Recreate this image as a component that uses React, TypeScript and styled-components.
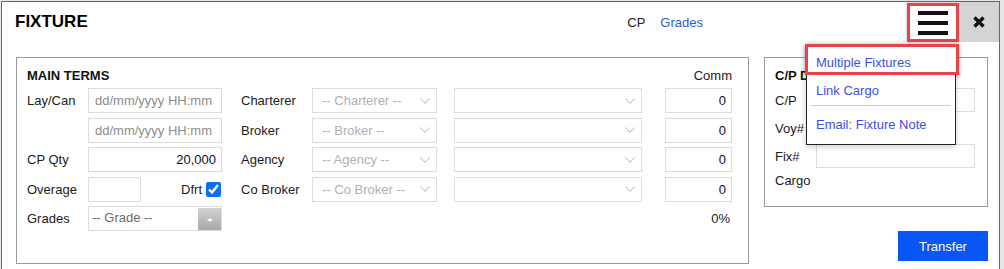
import { Fragment } from 'react';
import styled, { createGlobalStyle } from 'styled-components';
import { ChevronDown } from 'lucide-react';

const GlobalStyle = createGlobalStyle`
  html, body {
    overflow: hidden;
  }
  body {
    margin: 0;
    background: #e6e6e6;
    font-family: 'Liberation Sans', Arial, sans-serif;
    font-size: 13px;
    color: #1b1b1b;
  }
`;

const Modal = styled.div`
  position: relative;
  margin: 1px 0 0 1px;
  width: 999px;
  height: 268px;
  box-sizing: border-box;
  border: 1px solid #2f6de2;
  border-bottom: none;
  background: #fff;
`;

const Header = styled.header`
  display: flex;
  align-items: center;
  height: 40px;
`;

const Title = styled.h1`
  flex: 1;
  margin: 0;
  padding-left: 13px;
  font-size: 17px;
  font-weight: bold;
  color: #000;
`;

const HeadLinks = styled.nav`
  display: flex;
  gap: 15px;
  margin-right: 204px;
`;

const HeadLink = styled.a<{ $active?: boolean }>`
  color: ${(p) => (p.$active ? '#1b1b1b' : '#2d5be3')};
  text-decoration: none;
`;

const MenuButton = styled.button`
  align-self: flex-end;
  width: 52px;
  height: 39px;
  box-sizing: border-box;
  border: 3px solid #ea4246;
  box-shadow: 0 0 3px rgba(0, 0, 0, 0.3);
  background: #fff;
  padding: 0;
  display: flex;
  flex-direction: column;
  align-items: center;
  justify-content: center;
  gap: 6px;
`;

const MenuLine = styled.span`
  display: block;
  width: 30px;
  height: 4px;
  background: #111;
`;

const CloseButton = styled.button`
  align-self: stretch;
  width: 40px;
  border: none;
  padding: 0;
  background: #d4d4d4;
  display: flex;
  align-items: center;
  justify-content: center;
`;

const Dropdown = styled.ul`
  position: absolute;
  left: 804px;
  top: 42px;
  width: 150px;
  box-sizing: border-box;
  margin: 0;
  padding: 0 0 7px;
  list-style: none;
  background: #fff;
  border: 1px solid #222;
  box-shadow: 0 2px 6px rgba(0, 0, 0, 0.2);
  z-index: 5;
`;

const MenuItem = styled.li<{ $active?: boolean }>`
  display: flex;
  align-items: center;
  box-sizing: border-box;
  color: #3b4fe8;
  height: ${(p) => (p.$active ? '31px' : '28px')};
  padding: ${(p) => (p.$active ? '5px 0 0 8px' : '2px 0 0 9px')};
  margin: ${(p) => (p.$active ? '-1px -4px 0 -2px' : '0')};
  border: ${(p) => (p.$active ? '3px solid #ea4246' : 'none')};
  box-shadow: ${(p) => (p.$active ? '0 1px 4px rgba(0,0,0,0.35)' : 'none')};
  background: #fff;
`;

const MenuDivider = styled.li`
  height: 1px;
  margin: 2px 4px 3px;
  background: #cfcfcf;
`;

const Body = styled.div`
  display: flex;
  gap: 15px;
  padding: 15px 0 0 14px;
`;

const Panel = styled.section<{ $w: number; $h: number; $pr?: number }>`
  width: ${(p) => p.$w}px;
  height: ${(p) => p.$h}px;
  box-sizing: border-box;
  border: 1px solid #9a9a9a;
  padding: 9px ${(p) => p.$pr ?? 12}px 0 10px;
`;

const PanelHead = styled.div`
  display: flex;
  justify-content: space-between;
  align-items: center;
  height: 16px;
`;

const PanelTitle = styled.h2`
  margin: 0;
  font-size: 13px;
  font-weight: bold;
  color: #111;
`;

const TermsGrid = styled.div`
  display: grid;
  grid-template-columns: 61px 134px 90px 125px 228px 67px;
  grid-auto-rows: 25px;
  row-gap: 4.5px;
  margin-top: 5px;
`;

const CpGrid = styled.div`
  display: grid;
  grid-template-columns: 41px 159px;
  grid-template-rows: 24px 24px 24px 16px;
  row-gap: 4px;
  margin-top: 5px;
`;

const Label = styled.label<{ $indent?: number }>`
  display: flex;
  align-items: center;
  padding-left: ${(p) => p.$indent ?? 0}px;
  white-space: nowrap;
`;

const TextInput = styled.input<{ $w?: number; $right?: boolean }>`
  box-sizing: border-box;
  width: ${(p) => (p.$w ? `${p.$w}px` : '100%')};
  height: 100%;
  margin: 0;
  border: 1px solid #dcdcdc;
  border-radius: 0;
  padding: ${(p) => (p.$right ? '0 5px 0 4px' : '0 4px 0 6px')};
  font: inherit;
  color: #111;
  text-align: ${(p) => (p.$right ? 'right' : 'left')};
  outline: none;
  &::placeholder {
    color: #8c8c8c;
  }
`;

const SelectBox = styled.div<{ $w?: number; $ml?: number }>`
  display: flex;
  align-items: center;
  justify-content: space-between;
  box-sizing: border-box;
  width: ${(p) => (p.$w ? `${p.$w}px` : '100%')};
  margin-left: ${(p) => p.$ml ?? 0}px;
  height: 100%;
  border: 1px solid #dcdcdc;
  padding: 0 2px 0 9px;
  color: #b0b0b0;
  white-space: nowrap;
`;

const FieldRow = styled.div`
  display: flex;
  align-items: center;
  height: 100%;
`;

const CheckLabel = styled.span`
  margin-left: auto;
  margin-right: 4px;
`;

const Check = styled.input`
  width: 15px;
  height: 15px;
  margin: 0 1px 0 0;
  accent-color: #0b6ef6;
`;

const GradeSelect = styled.div`
  display: flex;
  box-sizing: border-box;
  height: 100%;
  border: 1px solid #dcdcdc;
  color: #6b6b6b;
`;

const GradeText = styled.span`
  flex: 1;
  padding: 0 0 3px 3px;
  display: flex;
  align-items: center;
`;

const GradeArrow = styled.span`
  width: 23px;
  margin: 1px 0 0;
  background: linear-gradient(#d3d3d3, #a8a8a8);
  display: flex;
  align-items: center;
  justify-content: center;
  padding-top: 3px;
  box-sizing: border-box;
  &::after {
    content: '';
    border-left: 3px solid transparent;
    border-right: 3px solid transparent;
    border-top: 3px solid #fff;
  }
`;

const Percent = styled.div`
  grid-column: 6;
  display: flex;
  align-items: center;
  justify-content: flex-end;
  padding-right: 2px;
`;

const RightCol = styled.div`
  display: flex;
  flex-direction: column;
  align-items: flex-end;
`;

const TransferButton = styled.button`
  margin-top: 24px;
  width: 90px;
  height: 30px;
  border: none;
  background: #0856f6;
  color: #fff;
  font: inherit;
`;

const Chevron = () => <ChevronDown size={18} strokeWidth={1.4} color="#bdbdbd" />;

const parties = ['Charterer', 'Broker', 'Agency', 'Co Broker'];

const App = () => {
  const leftCells = [
    <>
      <Label>Lay/Can</Label>
      <TextInput placeholder="dd/mm/yyyy HH:mm" />
    </>,
    <>
      <span />
      <TextInput placeholder="dd/mm/yyyy HH:mm" />
    </>,
    <>
      <Label>CP Qty</Label>
      <TextInput $right defaultValue="20,000" />
    </>,
    <>
      <Label>Overage</Label>
      <FieldRow>
        <TextInput $w={53} />
        <CheckLabel>Dfrt</CheckLabel>
        <Check type="checkbox" defaultChecked />
      </FieldRow>
    </>,
  ];

  return (
    <>
      <GlobalStyle />
      <Modal>
        <Header>
          <Title>FIXTURE</Title>
          <HeadLinks>
            <HeadLink $active>CP</HeadLink>
            <HeadLink>Grades</HeadLink>
          </HeadLinks>
          <MenuButton>
            <MenuLine />
            <MenuLine />
            <MenuLine />
          </MenuButton>
          <CloseButton>
            <svg width="12" height="12" viewBox="0 0 12 12">
              <path d="M1.5 1.5 L10.5 10.5 M10.5 1.5 L1.5 10.5" stroke="#111" strokeWidth="3.4" />
            </svg>
          </CloseButton>
        </Header>

        <Dropdown>
          <MenuItem $active>Multiple Fixtures</MenuItem>
          <MenuItem>Link Cargo</MenuItem>
          <MenuDivider />
          <MenuItem>Email: Fixture Note</MenuItem>
        </Dropdown>

        <Body>
          <Panel $w={733} $h={207} $pr={16}>
            <PanelHead>
              <PanelTitle>MAIN TERMS</PanelTitle>
              <span>Comm</span>
            </PanelHead>
            <TermsGrid>
              {parties.map((party, i) => (
                <Fragment key={party}>
                  {leftCells[i]}
                  <Label $indent={19}>{party}</Label>
                  <SelectBox>
                    -- {party} --
                    <Chevron />
                  </SelectBox>
                  <SelectBox $w={188} $ml={17}>
                    <span />
                    <Chevron />
                  </SelectBox>
                  <TextInput $right defaultValue="0" />
                </Fragment>
              ))}
              <Label>Grades</Label>
              <GradeSelect>
                <GradeText>-- Grade --</GradeText>
                <GradeArrow />
              </GradeSelect>
              <Percent>0%</Percent>
            </TermsGrid>
          </Panel>

          <RightCol>
            <Panel $w={224} $h={150}>
              <PanelHead>
                <PanelTitle>C/P Details</PanelTitle>
              </PanelHead>
              <CpGrid>
                <Label>C/P</Label>
                <TextInput />
                <Label>Voy#</Label>
                <span />
                <Label>Fix#</Label>
                <TextInput />
                <Label>Cargo</Label>
                <span />
              </CpGrid>
            </Panel>
            <TransferButton>Transfer</TransferButton>
          </RightCol>
        </Body>
      </Modal>
    </>
  );
};

export default App;
